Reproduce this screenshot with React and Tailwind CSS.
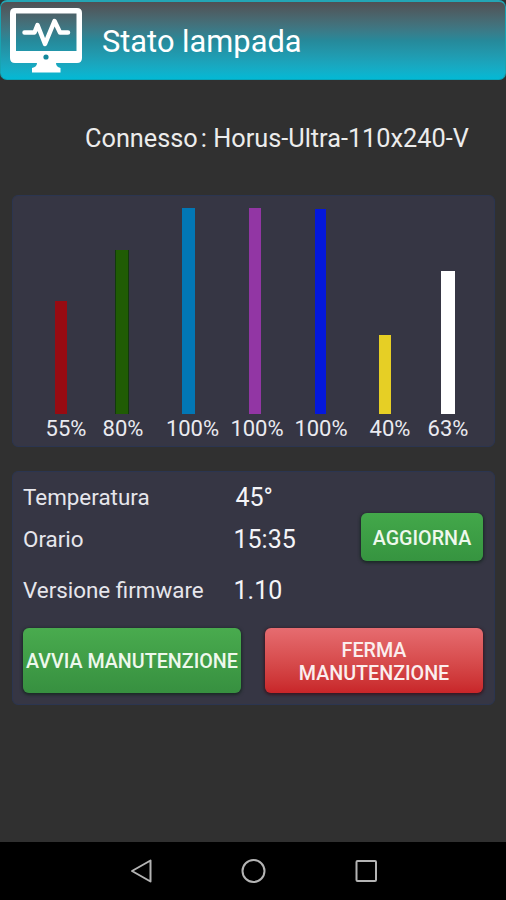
import React from "react";

const bars = [
  { value: 55, bar: "ml-[42px] w-3 h-[113px] bg-[#970b12]", label: "ml-[33px] w-10" },
  { value: 80, bar: "ml-[48px] w-3.5 h-[164px] bg-[#205c04] border-x border-[#123a0c]", label: "ml-[17px] w-10" },
  { value: 100, bar: "ml-[53px] w-[13px] h-[206px] bg-[#0277b5]", label: "ml-[23.5px] w-[52px]" },
  { value: 100, bar: "ml-[54px] w-3 h-[206px] bg-[#9236a4]", label: "ml-[12.5px] w-[52px]" },
  { value: 100, bar: "ml-[54px] w-[11px] h-[205px] bg-[#0418dc]", label: "ml-[12px] w-[52px]" },
  { value: 40, bar: "ml-[53px] w-3 h-[79px] bg-[#e6cf25]", label: "ml-[23px] w-10" },
  { value: 63, bar: "ml-[50px] w-3.5 h-[143px] bg-white", label: "ml-[18px] w-10" },
];

const MonitorIcon = () => (
  <svg className="ml-[9px] mt-[6px] w-[73px] h-[66px] shrink-0" viewBox="0 0 73 66" fill="none">
    <path
      fill="#fff"
      fillRule="evenodd"
      d="M5 0H67Q72 0 72 5V50Q72 55 67 55H46Q46 59 50.500 60V64.500H22V60Q27 59 27 55H5Q0 55 0 50V5Q0 0 5 0ZM6 5.500V43H66.500V5.500Z"
    />
    <circle cx="36" cy="49" r="2.6" fill="#12889c" />
    <path
      d="M14.500 24.500H24.500L27.500 17L35 36L44.500 13L50 24.500H58"
      stroke="#fff"
      strokeWidth="4.5"
      strokeLinecap="round"
      strokeLinejoin="round"
    />
  </svg>
);

const Row = ({ name, value, className = "", valueClass = "" }) => (
  <div className={`flex items-center h-[42px] ${className}`}>
    <span className="w-[210.500px] text-[22.4px] text-[#e6e6ec] whitespace-nowrap">{name}</span>
    <span className={`text-[25px] text-[#f4f4f8] whitespace-nowrap ${valueClass}`}>{value}</span>
  </div>
);

const App = () => {
  return (
    <div className="w-[506px] h-[900px] flex flex-col overflow-hidden bg-[#303030] font-['Roboto',sans-serif]">
      <header className="flex h-20 shrink-0 rounded-[7px] border border-t-2 border-t-[#24a5b4] border-x-[#18a3b2] border-b-[#0aa5b8] bg-linear-to-b from-[#505053] via-[#26899a] to-[#02b9d5] w-[506px]">
        <MonitorIcon />
        <h1 className="ml-[19px] mt-[18px] text-[30.8px] leading-[44px] text-white whitespace-nowrap">
          Stato lampada
        </h1>
      </header>

      <p className="mt-[39px] ml-[85px] h-10 text-[25.3px] leading-10 text-[#ececec] whitespace-nowrap">
        <span className="mr-[3px]">Connesso</span>: Horus-Ultra-110x240-V
      </p>

      <section className="mt-[36px] ml-3 w-[483px] h-[252px] shrink-0 rounded-md border border-[#2b3550] bg-[#363644]">
        <div className="flex items-end h-[218px]">
          {bars.map((b, i) => (
            <div key={i} className={`shrink-0 ${b.bar}`} />
          ))}
        </div>
        <div className="flex mt-[2px]">
          {bars.map((b, i) => (
            <span
              key={i}
              className={`flex justify-center shrink-0 text-[22px] leading-[26px] text-[#eaeaf0] ${b.label}`}
            >
              {b.value}%
            </span>
          ))}
        </div>
      </section>

      <section className="mt-6 ml-3 w-[483px] h-[234px] shrink-0 rounded-md border border-[#2b3550] bg-[#363644] pl-[10px] pr-[11px]">
        <div className="flex justify-between">
          <div>
            <Row name="Temperatura" value="45°" className="mt-[5px]" valueClass="ml-[2px]" />
            <Row name="Orario" value="15:35" />
            <Row name="Versione firmware" value="1.10" className="mt-[9px]" />
          </div>
          <button className="mt-[41px] h-[48px] w-[122px] pt-[3px] rounded-md bg-linear-to-b from-[#43a84a] to-[#369440] text-[19.7px] font-medium text-[#eef8ec] shadow-[0_1px_3px_1px_rgba(15,35,25,0.7)]">
            AGGIORNA
          </button>
        </div>
        <div className="flex justify-between mt-4">
          <button className="h-[65px] w-[218px] pt-[2px] rounded-md bg-linear-to-b from-[#49ab4e] to-[#379040] text-[19.7px] font-medium text-[#eef8ec] whitespace-nowrap shadow-[0_1px_3px_1px_rgba(15,35,25,0.7)]">
            AVVIA MANUTENZIONE
          </button>
          <button className="h-[65px] w-[218px] pt-[2px] rounded-md bg-linear-to-b from-[#e66c70] to-[#c82529] text-[19.7px] leading-[23px] font-medium text-[#fbeeee] shadow-[0_1px_3px_1px_rgba(55,12,20,0.7)]">
            FERMA
            <br />
            MANUTENZIONE
          </button>
        </div>
      </section>

      <nav className="mt-auto h-[58px] shrink-0 bg-black flex justify-center">
        <svg className="mt-[15px] w-[260px] h-7" viewBox="0 0 260 28" fill="none" stroke="#b4b4b4" strokeWidth="2">
          <path d="M27.500 3.500V24.500L9 14Z" strokeLinejoin="round" />
          <circle cx="130.500" cy="14" r="11" />
          <rect x="233.500" y="4" width="19.500" height="20" rx="1" />
        </svg>
      </nav>
    </div>
  );
};

export default App;
